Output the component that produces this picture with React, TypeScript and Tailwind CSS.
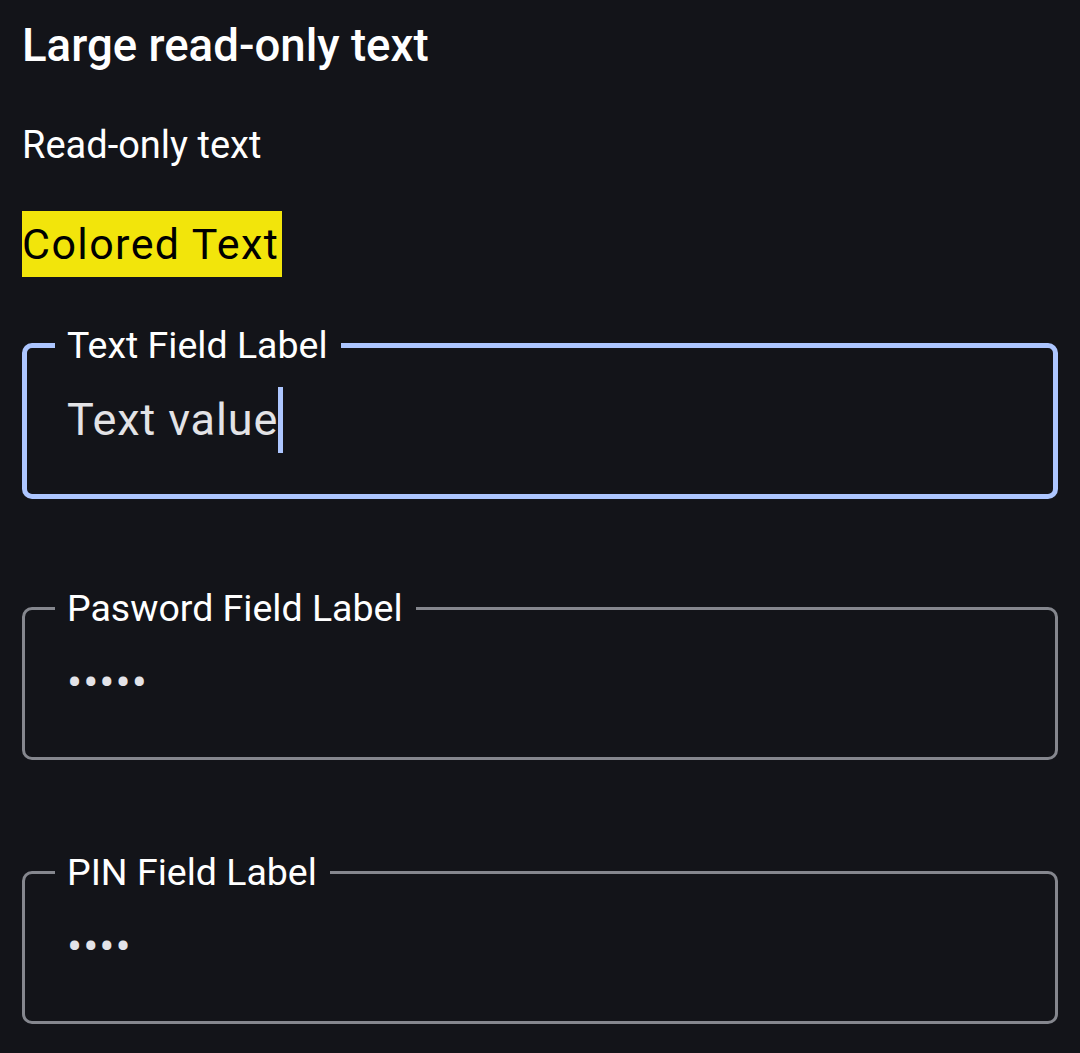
import React from 'react'

const font = { fontFamily: 'Roboto, "Noto Sans", sans-serif' }

function Field({
  label,
  value,
  focused,
  secret,
}: {
  label: string
  value: string
  focused?: boolean
  secret?: boolean
}) {
  return (
    <fieldset
      className={`rounded-[10px] pb-[41px] pt-[21px] ${
        focused ? 'border-[5px] border-[#adc6ff] pl-[28px]' : 'border-[3px] border-[#85878e] pl-[30px]'
      }`}
    >
      <legend className="pl-3 pr-[13px] text-[37.5px] leading-[42px] text-white">{label}</legend>
      <div className="ml-3 flex h-[66px] items-start">
        {secret ? (
          <span className="text-[45px] leading-[66px] tracking-[1px] text-[#e3e3e8]">{value}</span>
        ) : (
          <span className="text-[45px] leading-[66px] tracking-[0.9px] text-[#e3e3e6]">{value}</span>
        )}
        {focused && <span className="h-[66px] w-[5px] bg-[#adc6ff]" />}
      </div>
    </fieldset>
  )
}

export default function App() {
  return (
    <div className="min-h-[1053px] bg-[#131419] px-[22px] pt-[19px]" style={font}>
      <h1 className="text-[45.6px] font-medium leading-[53px] text-white">Large read-only text</h1>
      <p className="mt-[52px] text-[38px] leading-[42px] text-white">Read-only text</p>
      <div className="mt-[45px]">
        <span className="inline-block bg-[#f2e50b] pr-[3px] text-[43px] leading-[66px] tracking-[1.4px] text-black">
          Colored Text
        </span>
      </div>

      <div className="mt-[47px]">
        <Field label="Text Field Label" value="Text value" focused />
      </div>
      <div className="mt-[88px]">
        <Field label="Pasword Field Label" value="•••••" secret />
      </div>
      <div className="mt-[91px]">
        <Field label="PIN Field Label" value="••••" secret />
      </div>
    </div>
  )
}
